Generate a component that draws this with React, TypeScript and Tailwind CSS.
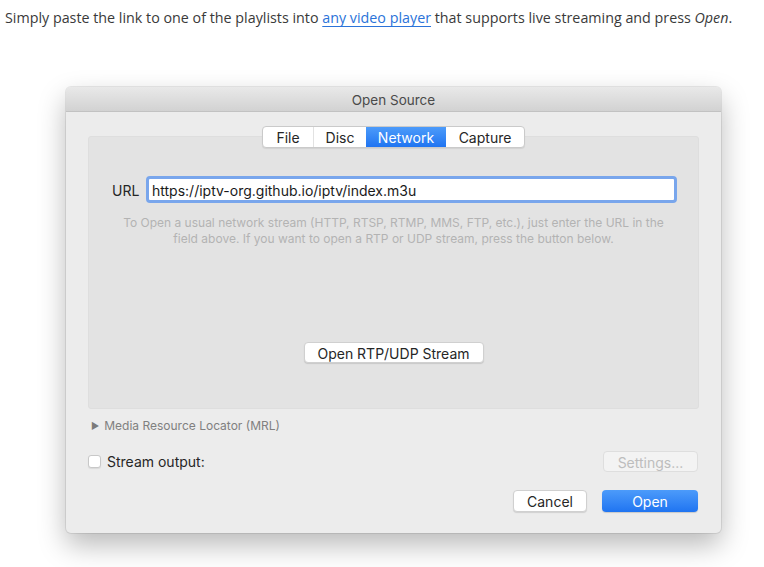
import { useState } from 'react'

const tabs = ['File', 'Disc', 'Network', 'Capture'] as const
const tabWidth: Record<string, string> = {
  File: 'w-[50px]',
  Disc: 'w-[53px]',
  Network: 'w-[80px]',
  Capture: 'w-[78px]',
}

export default function App() {
  const [tab, setTab] = useState<string>('Network')
  const [url, setUrl] = useState('https://iptv-org.github.io/iptv/index.m3u')
  const [streamOut, setStreamOut] = useState(false)

  return (
    <div className="w-[764px] h-[567px] bg-white overflow-hidden">
      {/* Intro line */}
      <p className="pt-[8px] pl-[5px] text-[14.3px] leading-[20px] text-[#3a3a3a] font-['Open_Sans',sans-serif]">
        Simply paste the link to one of the playlists into{' '}
        <a href="#" className="text-[#2b73d9] underline decoration-1 underline-offset-[3px]">any video player</a>{' '}
        that supports live streaming and press <em>Open</em>.
      </p>

      {/* Dialog */}
      <div className="mt-[59px] ml-[66px] w-[655px] rounded-[5px] bg-[#ececec] shadow-[0_12px_28px_rgba(0,0,0,0.28),0_0_0_1px_rgba(0,0,0,0.08)] font-['Inter',sans-serif] text-[#262626]">
        {/* Title bar */}
        <div className="h-[25px] rounded-t-[5px] bg-gradient-to-b from-[#e9e9e9] to-[#d2d2d2] border-b border-[#c2c2c2] flex items-center justify-center pt-[2px] text-[13.5px] text-[#4a4a4a]">
          Open Source
        </div>

        <div className="px-[22px] pt-[14px] pb-[21px]">
          {/* Tabs */}
          <div className="relative z-10 flex justify-center">
            <div className="flex h-[22px] rounded-[4px] bg-white border border-[#cacaca] shadow-[0_1px_1px_rgba(0,0,0,0.08)] overflow-hidden text-[14px]">
              {tabs.map((t, i) => (
                <button
                  key={t}
                  onClick={() => setTab(t)}
                  className={`${tabWidth[t]} flex items-center justify-center pt-[1px] ${
                    tab === t
                      ? 'bg-gradient-to-b from-[#4c9bfa] to-[#1f74f1] text-white'
                      : 'text-[#262626]'
                  } ${i > 0 && tab !== t && tabs[i - 1] !== tab ? 'border-l border-[#e2e2e2]' : ''}`}
                >
                  {t}
                </button>
              ))}
            </div>
          </div>

          {/* Panel */}
          <div className="-mt-[12px] h-[273px] rounded-[3px] bg-[#e3e3e3] border border-[#dedede] pt-[39px]">
            <div className="flex items-center pl-[23px]">
              <span className="text-[14px] w-[34px] pt-[1px]">URL</span>
              <div className="w-[531px] h-[27px] rounded-[4px] border-[3px] border-[#79a6ec] bg-white flex items-center px-[3px]">
                <input
                  value={url}
                  onChange={e => setUrl(e.target.value)}
                  className="w-full bg-transparent outline-none text-[14px] text-[#1a1a1a] caret-black pt-[1px]"
                />
              </div>
            </div>

            <p className="mt-[12px] text-center text-[12px] leading-[16px] text-[#b3b3b3]">
              To Open a usual network stream (HTTP, RTSP, RTMP, MMS, FTP, etc.), just enter the URL in the
              <br />
              field above. If you want to open a RTP or UDP stream, press the button below.
            </p>

            <div className="mt-[95px] flex justify-center">
              <button className="w-[180px] h-[21px] rounded-[4px] bg-white border border-[#d0d0d0] shadow-[0_1px_1px_rgba(0,0,0,0.12)] text-[14px]">
                Open RTP/UDP Stream
              </button>
            </div>
          </div>

          {/* MRL */}
          <div className="mt-[9px] h-[16px] pl-[3px] flex items-center gap-[5px] text-[12px] text-[#808080]">
            <span className="text-[9px] text-[#7a7a7a]">▶</span>
            <span>Media Resource Locator (MRL)</span>
          </div>

          {/* Stream output */}
          <div className="mt-[17px] h-[21px] flex items-center justify-between pr-[1px]">
            <label className="flex items-center gap-[6px] text-[14px] cursor-pointer">
              <span
                onClick={() => setStreamOut(!streamOut)}
                className="w-[13px] h-[13px] rounded-[3px] bg-white border border-[#c8c8c8] shadow-[0_1px_1px_rgba(0,0,0,0.08)] flex items-center justify-center text-[10px]"
              >
                {streamOut ? '✓' : ''}
              </span>
              Stream output:
            </label>
            <button disabled className="w-[95px] h-[21px] rounded-[4px] bg-[#f3f3f3] border border-[#dedede] text-[14px] text-[#bdbdbd]">
              Settings...
            </button>
          </div>

          {/* Actions */}
          <div className="mt-[18px] h-[22px] flex justify-end gap-[15px] pr-[1px]">
            <button className="w-[74px] h-[22px] rounded-[4px] bg-white border border-[#d0d0d0] shadow-[0_1px_1px_rgba(0,0,0,0.12)] text-[14px]">
              Cancel
            </button>
            <button className="w-[96px] h-[22px] rounded-[4px] bg-gradient-to-b from-[#4c9bfa] to-[#1f74f1] text-white text-[14px] shadow-[0_1px_1px_rgba(0,0,0,0.15)]">
              Open
            </button>
          </div>
        </div>
      </div>
    </div>
  )
}
